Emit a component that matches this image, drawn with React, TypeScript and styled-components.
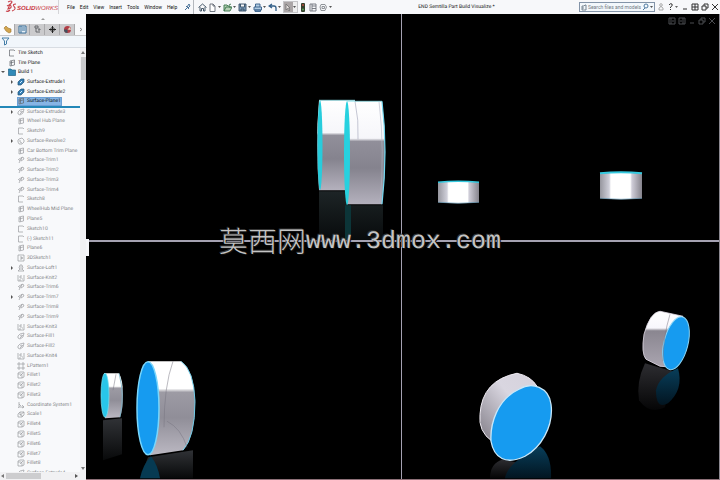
import React from "react";
import styled, { createGlobalStyle, css } from "styled-components";

const GlobalStyle = createGlobalStyle`
  * { box-sizing: border-box; }
  html, body, #root { height: 100%; margin: 0; }
  body { background: #000; overflow: hidden; }
  body, button, input { font-family: Roboto, sans-serif; font-size: 5px; }
  button { border: 0; padding: 0; background: none; color: inherit; }
  svg { display: block; flex: none; }
`;

const Shell = styled.div`
  height: 100vh;
  display: flex;
  flex-direction: column;
  position: relative;
  text-rendering: geometricPrecision;
`;

const Header = styled.header`
  flex: 0 0 14px;
  display: flex;
  align-items: center;
  background: #f7f8fa;
  color: #111;
`;

const Brand = styled.div`
  flex: 0 0 59px;
  height: 14px;
  border-right: 1px solid #d5d5d8;
`;

const Menu = styled.nav`
  flex: 0 0 135px;
  height: 14px;
  display: flex;
  align-items: center;
  gap: 5px;
  padding: 0 2px 0 8px;
  border-right: 1px solid #b4b8bd;
`;

const IconButton = styled.button`
  line-height: 8px;
`;

const MenuButton = styled(IconButton)`
  white-space: nowrap;
`;

const PinButton = styled(IconButton)`
  margin-left: auto;
`;

const Toolbar = styled.div`
  display: flex;
  align-items: center;
  padding-left: 4px;
`;

const ToolButton = styled.button<{ $wide?: boolean; $active?: boolean }>`
  display: flex;
  align-items: center;
  justify-content: space-between;
  width: ${(p) => (p.$wide ? 15 : 10)}px;
  height: 12px;
  padding: 0 2px 0 0;
  ${(p) =>
    p.$active &&
    css`
      background: linear-gradient(90deg, #aaa5a6 0 10px, #eee 10px);
      outline: 1px solid #c5c5c8;
      outline-offset: -1px;
      margin-right: 1px;
    `}
`;

const Title = styled.h1`
  flex: 1;
  margin: 0;
  font-size: 5px;
  font-weight: 400;
  line-height: 8px;
  text-align: center;
  color: #111;
  white-space: nowrap;
`;

const Search = styled.label`
  flex: 0 0 76px;
  min-width: 0;
  height: 10px;
  display: flex;
  align-items: center;
  gap: 1px;
  padding: 0 1px;
  border: 1px solid #8394a8;
  background: #f3f8fc;
`;

const SearchInput = styled.input`
  flex: 1;
  min-width: 0;
  height: 7px;
  padding: 0;
  border: 0;
  background: none;
  &::placeholder { color: #727a83; opacity: 1; }
`;

const WindowControls = styled.div<{ $dim?: boolean }>`
  display: flex;
  align-items: center;
  gap: 2px;
  ${(p) =>
    p.$dim
      ? css`
          position: absolute;
          top: 3px;
          right: 3px;
          color: #4b4d51;
        `
      : css`
          padding: 0 1px 0 2px;
          color: #333;
        `}
`;

const Body = styled.div`
  flex: 1;
  min-height: 0;
  display: flex;
`;

const Sidebar = styled.aside`
  flex: 0 0 86px;
  display: flex;
  flex-direction: column;
  background: #f8f9fb;
  position: relative;
`;

const Splitter = styled.div`
  flex: 0 0 10px;
  display: flex;
  align-items: center;
  justify-content: center;
`;

const Tabs = styled.div`
  flex: 0 0 12px;
  display: flex;
  border-bottom: 1px solid #c9c9cb;
`;

const TabButton = styled.button<{ $active?: boolean }>`
  width: 15px;
  display: flex;
  align-items: center;
  justify-content: center;
  border-right: 1px solid #a9a9ab;
  background: ${(p) => (p.$active ? "#fbfbfc" : "#cbcbcd")};
`;

const MoreTabs = styled.button`
  flex: 1;
  display: flex;
  align-items: center;
  justify-content: center;
`;

const FilterRow = styled.div`
  flex: 0 0 12px;
  display: flex;
  align-items: center;
  padding-left: 1px;
  background: #f1f6fb;
  border-bottom: 1px solid #d8dde3;
`;

const TreeArea = styled.div`
  flex: 1;
  min-height: 0;
  display: flex;
  overflow: hidden;
`;

const Tree = styled.ul`
  flex: 1;
  min-width: 0;
  margin: 0 0 -6px;
  padding: 0;
  list-style: none;
  display: grid;
  grid-auto-rows: minmax(0, 1fr);
`;

const Row = styled.li<{ $root?: boolean; $muted?: boolean; $marker?: boolean }>`
  display: flex;
  align-items: center;
  padding-left: ${(p) => (p.$root ? 1 : 10)}px;
  color: ${(p) => (p.$muted ? "#848588" : "#111")};
  border-bottom: ${(p) => (p.$marker ? "1px solid #2488b8" : "0")};
  box-shadow: ${(p) => (p.$marker ? "0 1px 0 #2488b8" : "none")};
`;

const Arrow = styled.span`
  width: 7px;
  flex: none;
`;

const RowLabel = styled.span<{ $selected?: boolean }>`
  display: flex;
  align-items: center;
  gap: 2px;
  height: 9px;
  padding-right: 1px;
  line-height: 8px;
  white-space: nowrap;
  background: ${(p) => (p.$selected ? "#86b5e5" : "none")};
  box-shadow: ${(p) => (p.$selected ? "inset 0 0 0 1px #6c9fd4" : "none")};
`;

const ScrollY = styled.div`
  flex: 0 0 6px;
  display: flex;
  flex-direction: column;
  align-items: center;
  justify-content: space-between;
  padding: 3px 0 2px;
  background: #f1f1f3;
`;

const ThumbY = styled.div`
  width: 5px;
  height: 23px;
  margin: 3px 0 auto;
  background: #c9cacc;
`;

const ScrollX = styled.div`
  flex: 0 0 8px;
  display: flex;
  align-items: center;
  gap: 2px;
  padding: 0 8px 1px 1px;
  background: #f1f1f3;
`;

const ThumbX = styled.div`
  width: 35px;
  height: 6px;
  margin-right: auto;
  background: #cdcdcf;
`;

const Handle = styled.button`
  position: absolute;
  left: 86px;
  top: calc(50% - 8px);
  width: 3px;
  height: 17px;
  background: #f5f5f8;
  z-index: 1;
`;

const Viewports = styled.main`
  flex: 1;
  min-width: 0;
  position: relative;
  display: grid;
  grid-template-columns: 315fr 317fr;
  grid-template-rows: 226fr 236fr;
  gap: 2px 1px;
  background: #a5a2b2;
  border-right: 1px solid #8b8890;
  border-bottom: 1px solid #8e7078;
`;

const Pane = styled.section`
  min-width: 0;
  min-height: 0;
  overflow: hidden;
  background: #000;
`;

const Scene = styled.svg`
  width: 100%;
  height: 100%;
`;

const Watermark = styled.div`
  position: absolute;
  top: 50%;
  left: 50%;
  transform: translate(-50%, -50%);
  display: flex;
  align-items: center;
  white-space: nowrap;
  color: #c4c4c4;
  text-shadow: 1px 1px 0 #111, -1px -1px 0 #333;
  pointer-events: none;
`;

const WatermarkHan = styled.span`
  font: 300 29px/32px "Noto Sans CJK SC", sans-serif;
`;

const WatermarkLatin = styled.span`
  padding-top: 4px;
  font: 25px/34px "Liberation Mono", monospace;
`;

type Kind =
  | "sketch" | "plane" | "folder" | "extrude" | "revolve" | "trim" | "loft"
  | "knit" | "fill" | "pattern" | "fillet" | "coord" | "scale" | "sketch3d";

const shapes: Record<Kind, React.ReactNode> = {
  sketch: <path d="M6 1H1.5V7H6M6 1L7 2" />,
  plane: <path d="M2 2L6.5 1V6L2 7ZM3.5 2V6.5M2 4L6 3" />,
  folder: <path d="M0.500 1H3L4 2H7.500V7.500H0.500Z" fill="#318ab8" stroke="#216487" />,
  extrude: (
    <g>
      <path d="M1 4L4 1L7 1L7 4L4 7L1 7Z" fill="#347db4" stroke="#245477" />
      <path d="M3 5L5 3" stroke="#d4efff" strokeWidth="1" />
    </g>
  ),
  revolve: <path d="M2 2L5 1L7 3V5L5 7H2L1 5V3ZM3 3V5L5 6" />,
  trim: <path d="M1 3L3 5L2 7M2 3L6 1L7 3L4 5L3 3M5 1L4 4" />,
  loft: <path d="M3 1H5L6 4L5 5L7 7H1L3 5L2 4ZM3 3H5M3 5H5" />,
  knit: <path d="M1 1V7H7V1M3 5V7M4 1V5M2 3H4M5 5H6" />,
  fill: <path d="M1 4L3 2L7 1L6 5L3 7L1 6ZM3 4L5 3M3 6L6 3" />,
  pattern: <path d="M1 1H3V3H1ZM5 1H7V3H5ZM1 5H3V7H1ZM5 5H7V7H5Z" />,
  fillet: <path d="M1 2L3 1H7V6L5 7H1ZM1 3H4Q5 3 5 5V7M3 5L6 2" />,
  coord: <path d="M2 1V6H7M2 6L1 7M2 3L4 5M5 4L7 6L5 7" />,
  scale: <path d="M1 4L3 2H7V5L5 7H1ZM3 2V5H5V7M3 5L7 2" />,
  sketch3d: <path d="M1 1H7V7H1ZM3 3H5V5H3M5 3V5" />,
};

function KindIcon({ kind, muted }: { kind: Kind; muted?: boolean }) {
  return (
    <svg width="8" height="8" viewBox="0 0 8 8" fill="none" stroke={muted ? "#9a9b9f" : "#62656b"} strokeWidth="0.7" aria-hidden="true">
      {shapes[kind]}
    </svg>
  );
}

interface Item {
  label: string;
  kind: Kind;
  arrow?: boolean;
}

const roots: Item[] = [
  { label: "Tire Sketch", kind: "sketch" },
  { label: "Tire Plane", kind: "plane" },
  { label: "Build 1", kind: "folder", arrow: true },
];

const active: Item[] = [
  { label: "Surface-Extrude1", kind: "extrude", arrow: true },
  { label: "Surface-Extrude2", kind: "extrude", arrow: true },
  { label: "Surface-Plane1", kind: "plane" },
];

const suppressed: Item[] = [
  { label: "Surface-Extrude3", kind: "fill", arrow: true },
  { label: "Wheel Hub Plane", kind: "plane" },
  { label: "Sketch9", kind: "sketch" },
  { label: "Surface-Revolve2", kind: "revolve", arrow: true },
  { label: "Car Bottom Trim Plane", kind: "plane" },
  { label: "Surface-Trim1", kind: "trim" },
  { label: "Surface-Trim2", kind: "trim" },
  { label: "Surface-Trim3", kind: "trim" },
  { label: "Surface-Trim4", kind: "trim" },
  { label: "Sketch8", kind: "sketch" },
  { label: "WheelHub Mid Plane", kind: "plane" },
  { label: "Plane5", kind: "plane" },
  { label: "Sketch10", kind: "sketch" },
  { label: "(-) Sketch11", kind: "sketch" },
  { label: "Plane6", kind: "plane" },
  { label: "3DSketch1", kind: "sketch3d" },
  { label: "Surface-Loft1", kind: "loft", arrow: true },
  { label: "Surface-Knit2", kind: "knit" },
  { label: "Surface-Trim6", kind: "trim" },
  { label: "Surface-Trim7", kind: "trim", arrow: true },
  { label: "Surface-Trim8", kind: "trim" },
  { label: "Surface-Trim9", kind: "trim" },
  { label: "Surface-Knit3", kind: "knit" },
  { label: "Surface-Fill1", kind: "fill" },
  { label: "Surface-Fill2", kind: "fill" },
  { label: "Surface-Knit4", kind: "knit" },
  { label: "LPattern1", kind: "pattern" },
  { label: "Fillet1", kind: "fillet" },
  { label: "Fillet2", kind: "fillet" },
  { label: "Fillet3", kind: "fillet" },
  { label: "Coordinate System1", kind: "coord" },
  { label: "Scale1", kind: "scale" },
  { label: "Fillet4", kind: "fillet" },
  { label: "Fillet5", kind: "fillet" },
  { label: "Fillet6", kind: "fillet" },
  { label: "Fillet7", kind: "fillet" },
  { label: "Fillet8", kind: "fillet" },
  { label: "Surface-Extrude4", kind: "fill" },
];

function TreeRow({ item, root, muted, selected }: { item: Item; root?: boolean; muted?: boolean; selected?: boolean }) {
  return (
    <Row $root={root} $muted={muted} $marker={selected}>
      <Arrow>
        {item.arrow && (
          <svg width="4" height="4" viewBox="0 0 4 4" aria-hidden="true">
            <path d={root ? "M0 1H4L2 3Z" : "M1 0L3 2L1 4Z"} fill="#555" />
          </svg>
        )}
      </Arrow>
      <RowLabel $selected={selected}>
        <KindIcon kind={item.kind} muted={muted} />
        {item.label}
      </RowLabel>
    </Row>
  );
}

const menus = ["File", "Edit", "View", "Insert", "Tools", "Window", "Help"];

const tools: { name: string; wide?: boolean; active?: boolean; art: React.ReactNode }[] = [
  { name: "Home", art: <path d="M0.5 4.5L4.5 1L8.5 4.5M2 4V8H3.5V5.5H5.5V8H7V4" stroke="#33475a" /> },
  { name: "New", wide: true, art: <path d="M2 1H5L7 3V8.5H2ZM5 1V3H7" stroke="#626a74" fill="#fff" /> },
  { name: "Open", wide: true, art: <path d="M1 8V2H4L5 3H7V5M1 8L3 4H9L7 8ZM6 2L8 1" stroke="#39744b" fill="#b6d1b5" /> },
  { name: "Save", wide: true, art: <path d="M1 1H8V8H1ZM2.5 1V4H6.5V1M3 8V6H6V8" stroke="#344d65" fill="#7c9bb7" /> },
  { name: "Print", wide: true, art: <path d="M2.5 4V1H7V4M1 4H8.5V7H1ZM2 7H7.5V8.5H2Z" stroke="#365f88" fill="#b2cde3" /> },
  { name: "Undo", wide: true, art: <path d="M4 1L1 3L4 5M1 3H6Q8 3 8 5V8" stroke="#315e88" strokeWidth="1.3" /> },
  { name: "Select", wide: true, active: true, art: <path d="M3 1V7L4.5 5.5L6 8L7 7L5.5 5H7Z" fill="#e4dedd" stroke="#777" /> },
  {
    name: "Rebuild",
    art: (
      <g stroke="none">
        <rect x="2" y="0" width="4" height="9" rx="1" fill="#34402b" />
        <circle cx="4" cy="2" r="1" fill="#b34b3d" />
        <circle cx="4" cy="6.5" r="1" fill="#5aa35e" />
      </g>
    ),
  },
  { name: "File properties", art: <path d="M1 1H7V8H1ZM3 1V8M3 3H7M3 5.5H7" stroke="#6e737b" /> },
  { name: "Options", wide: true, art: <path d="M2 1.5H6L7.5 4L6 7.5H2L1 4ZM3 3.5H5.5V5.5H3Z" stroke="#85898f" /> },
];

const controls: { name: string; d: string }[] = [
  { name: "Minimize", d: "M2 6H6" },
  { name: "Maximize", d: "M1 1H7V7H1ZM1 4H7M4 1V7" },
  { name: "Restore", d: "M3 3V1H7V5H5M1 3H5V7H1Z" },
  { name: "Close", d: "M1 1L7 7M7 1L1 7" },
];

const paneControls: { name: string; d: string }[] = [
  { name: "Previous view", d: "M1 1H7V7H1ZM3 1V7M5 3V5" },
  { name: "Next view", d: "M1 1H7V7H1ZM5 1V7M3 3V5" },
  controls[0],
  controls[2],
  controls[3],
];

function LineIcon({ d }: { d: string }) {
  return (
    <svg width="8" height="8" viewBox="0 0 8 8" fill="none" stroke="currentColor" strokeWidth="1" aria-hidden="true">
      <path d={d} />
    </svg>
  );
}

function Logo() {
  return (
    <svg width="58" height="14" viewBox="0 0 58 14" role="img" aria-label="SOLIDWORKS">
      <g fill="none" stroke="#c8434b" strokeWidth="1.1">
        <path d="M8 2Q12 0 12 2Q11 4 9 5M10 4L8 9Q12 8 11 6Q10 4 7 6" />
        <path d="M16 4Q12 4 14 6.500Q17 9 12 11M6 11Q8 12 10 10" />
      </g>
      <text x="17" y="10" fontFamily="Liberation Sans" fontSize="6" fontWeight="700" fontStyle="italic" fill="#c8333c">
        SOLID<tspan fontWeight="400">WORKS</tspan>
      </text>
    </svg>
  );
}

function TopLeftScene() {
  return (
    <Scene viewBox="86 14 315 226" preserveAspectRatio="xMidYMid meet" aria-label="Side view of tires">
      <defs>
        <linearGradient id="side" x2="0" y2="1">
          <stop offset="0" stopColor="#fff" />
          <stop offset="0.36" stopColor="#f6f6fa" />
          <stop offset="0.39" stopColor="#918f9a" />
          <stop offset="0.65" stopColor="#85838e" />
          <stop offset="1" stopColor="#b4b1bd" />
        </linearGradient>
        <linearGradient id="mirror" x2="0" y2="1">
          <stop offset="0" stopColor="#1d2426" />
          <stop offset="1" stopColor="#080b0c" />
        </linearGradient>
      </defs>
      <path d="M319 191H346V240H319ZM346 205H383V240H346Z" fill="url(#mirror)" />
      <path d="M345 205H351V240H345Z" fill="#0c3538" />
      <path d="M319 100H355V190H319Q315 145 319 100Z" fill="url(#side)" />
      <ellipse cx="320" cy="145" rx="2.500" ry="45" fill="#27ccdc" />
      <path d="M346 101H382Q388 150 382 204H347Z" fill="url(#side)" />
      <path d="M382 101Q388 150 382 204" fill="none" stroke="#73d8f0" strokeWidth="1.200" />
      <path d="M379 101Q385 150 380 203" fill="none" stroke="#b2b6c6" strokeWidth="0.600" />
      <path d="M355 101Q359 120 358 139" fill="none" stroke="#8d91a8" strokeWidth="0.500" />
      <ellipse cx="347" cy="153" rx="3" ry="52" fill="#27d1df" />
      <path d="M319 100H355M347 101H382" stroke="#83dfea" strokeWidth="0.700" />
    </Scene>
  );
}

function TopRightScene() {
  return (
    <Scene viewBox="402 14 317 226" preserveAspectRatio="xMidYMid meet" aria-label="Front view of tires">
      <defs>
        <linearGradient id="front">
          <stop offset="0" stopColor="#96969e" />
          <stop offset="0.22" stopColor="#d0d0da" />
          <stop offset="0.26" stopColor="#fff" />
          <stop offset="0.72" stopColor="#fff" />
          <stop offset="0.76" stopColor="#cfcdd8" />
          <stop offset="1" stopColor="#85838c" />
        </linearGradient>
      </defs>
      <path d="M438 182Q458 180 479 182V202Q458 204 438 202Z" fill="url(#front)" />
      <path d="M438 182Q458 180 479 182" stroke="#35c9df" strokeWidth="1.500" fill="none" />
      <path d="M438 202Q458 204 479 202" stroke="#77a9c4" fill="none" strokeWidth="0.700" />
      <path d="M600 173Q621 172 642 173V198Q621 200 600 198Z" fill="url(#front)" />
      <path d="M600 173Q621 171 642 173" stroke="#35c9df" strokeWidth="2" fill="none" />
      <path d="M600 198Q621 200 642 198" stroke="#77a9c4" fill="none" strokeWidth="0.700" />
    </Scene>
  );
}

function BottomLeftScene() {
  return (
    <Scene viewBox="86 242 315 236" preserveAspectRatio="xMidYMid meet" aria-label="Angled view of tires">
      <defs>
        <linearGradient id="fade" x2="0" y2="1">
          <stop offset="0" stopColor="#303236" />
          <stop offset="1" stopColor="#08090a" />
        </linearGradient>
        <linearGradient id="tread" x2="0" y2="1">
          <stop offset="0" stopColor="#fff" />
          <stop offset="0.29" stopColor="#fff" />
          <stop offset="0.33" stopColor="#9d9ba4" />
          <stop offset="0.6" stopColor="#908e98" />
          <stop offset="1" stopColor="#bbb8c2" />
        </linearGradient>
      </defs>
      <path d="M103 420L122 418V454L103 460Z" fill="url(#fade)" />
      <path d="M148 457L193 450V478H140Z" fill="url(#fade)" />
      <path d="M140 478Q143 464 151 456Q158 465 160 478Z" fill="#063a52" />
      <path d="M104 373H119Q123 380 123 394Q123 410 120 417L105 418Z" fill="url(#tread)" />
      <ellipse cx="105" cy="395" rx="4" ry="22" fill="#28c6e9" stroke="#75dff1" strokeWidth="0.700" />
      <path d="M119 373Q125 395 120 417" fill="none" stroke="#75b5ca" strokeWidth="0.800" />
      <path d="M148 361H181Q194 370 195 401Q195 437 183 450L150 455Z" fill="url(#tread)" />
      <path d="M181 361Q194 370 195 401Q195 437 183 450" fill="none" stroke="#72cce8" />
      <ellipse cx="148" cy="408" rx="11" ry="46.500" fill="#169bf0" stroke="#79d6fc" strokeWidth="1.500" />
      <path d="M173 361Q164 386 164 427M167 421Q181 428 187 447M116 374L113 390" fill="none" stroke="#777580" strokeWidth="0.500" />
    </Scene>
  );
}

function BottomRightScene() {
  return (
    <Scene viewBox="402 242 317 236" preserveAspectRatio="xMidYMid meet" aria-label="Perspective view of tires">
      <defs>
        <linearGradient id="rim" x2="0" y2="1">
          <stop offset="0" stopColor="#fff" />
          <stop offset="0.300" stopColor="#f8f7fc" />
          <stop offset="0.350" stopColor="#8a8690" />
          <stop offset="1" stopColor="#aaa5b0" />
        </linearGradient>
        <linearGradient id="rimSoft" x1="1" x2="0" y2="1">
          <stop offset="0" stopColor="#d5d1dc" />
          <stop offset="0.400" stopColor="#d9d6e0" />
          <stop offset="1" stopColor="#817d87" />
        </linearGradient>
        <linearGradient id="poolBlue" x2="0" y2="1">
          <stop offset="0" stopColor="#083e5a" />
          <stop offset="1" stopColor="#021521" />
        </linearGradient>
        <linearGradient id="poolGray" x2="0" y2="1">
          <stop offset="0" stopColor="#2d2d31" />
          <stop offset="1" stopColor="#050506" />
        </linearGradient>
      </defs>
      <path d="M645 363Q636 382 639 400Q650 415 665 407L672 371Z" fill="url(#poolGray)" />
      <path d="M678 368Q684 389 668 403Q656 410 656 390Q659 376 678 368Z" fill="url(#poolBlue)" />
      <path d="M490 478Q490 463 503 459L548 470V478Z" fill="url(#poolGray)" />
      <path d="M505 478Q507 463 540 446Q552 455 551 478Z" fill="url(#poolBlue)" />
      <path d="M660 311L683 316L674 367L660 366L646 359Q641 353 644 334Q650 312 660 311Z" fill="url(#rim)" stroke="#e2dce7" strokeWidth="0.800" />
      <ellipse cx="676" cy="343" rx="12" ry="27" transform="rotate(14 676 343)" fill="#169bf0" stroke="#88d5f7" />
      <path d="M670 314Q663 337 663 361" fill="none" stroke="#777280" strokeWidth="0.500" />
      <path d="M517 373Q531 376 537 386L492 441Q478 431 480 414Q482 380 517 373Z" fill="url(#rimSoft)" stroke="#f0ecf4" />
      <path d="M491 441C490 424 497 399 519 389C532 381 549 387 551 404C554 427 540 448 525 456C506 465 494 458 491 441Z" fill="#169bf0" stroke="#c9e7f8" strokeWidth="1.300" />
    </Scene>
  );
}

export default function App() {
  return (
    <Shell>
      <GlobalStyle />
      <Header>
        <Brand><Logo /></Brand>
        <Menu aria-label="Application">
          {menus.map((m) => <MenuButton key={m}>{m}</MenuButton>)}
          <PinButton aria-label="Pin menu">
            <svg width="7" height="8" viewBox="0 0 7 8" fill="none" stroke="#477097"><path d="M1 7L3 5M2 3L5 6M3 4L5 1L6 3L4 5" /></svg>
          </PinButton>
        </Menu>
        <Toolbar>
          {tools.map((t) => (
            <ToolButton key={t.name} $wide={t.wide} $active={t.active} aria-label={t.name}>
              <svg width="9" height="9" viewBox="0 0 9 9" fill="none" strokeWidth="0.900">{t.art}</svg>
              {t.wide && <svg width="3" height="2" viewBox="0 0 3 2"><path d="M0 0H3L1.500 2Z" fill="#555" /></svg>}
            </ToolButton>
          ))}
        </Toolbar>
        <Title>END Semtilla Part Build Visualize *</Title>
        <Search>
          <svg width="6" height="7" viewBox="0 0 6 7" fill="none" stroke="#596b7a" strokeWidth="0.800"><path d="M1 2H3L4 1H5V6H1ZM2 3V5" /></svg>
          <SearchInput size={1} aria-label="Search files and models" placeholder="Search files and models" />
          <svg width="11" height="8" viewBox="0 0 11 8" fill="none" stroke="#4f7ba2"><circle cx="4" cy="3" r="2" /><path d="M3 5L1 7" /><path d="M8 3H11L9.500 5Z" fill="#555" stroke="none" /></svg>
        </Search>
        <WindowControls>
          <IconButton aria-label="Sign in"><svg width="8" height="8" viewBox="0 0 8 8" fill="none" stroke="#999" strokeWidth="0.800"><circle cx="4" cy="2" r="1.300" /><path d="M2 7V5L4 3.500L6 5V7Z" /></svg></IconButton>
          <IconButton aria-label="Help options"><svg width="12" height="8" viewBox="0 0 12 8" fill="none" stroke="#333"><path d="M2 2Q3 0 5 1Q6 3 3.500 4V5M3.500 6V7" /><path d="M8 3H11L9.500 5Z" fill="#666" stroke="none" /></svg></IconButton>
          {controls.map((c) => <IconButton key={c.name} aria-label={c.name}><LineIcon d={c.d} /></IconButton>)}
        </WindowControls>
      </Header>
      <Body>
        <Sidebar>
          <Splitter><svg width="4" height="3" viewBox="0 0 4 3"><path d="M0 2L2 0L4 2Z" fill="#999" /></svg></Splitter>
          <Tabs>
            <TabButton $active aria-label="Feature tree"><svg width="9" height="9" viewBox="0 0 9 9"><path d="M1 3L3 1L5 3L8 4V7L6 8L3 6Z" fill="#d3a54e" stroke="#9b742f" strokeWidth="0.600" /></svg></TabButton>
            <TabButton aria-label="Properties"><svg width="9" height="9" viewBox="0 0 9 9" fill="#e7f0f7" stroke="#386e99"><path d="M1 1H8V8H1ZM3 1V8M4 3H7M4 5H7" /></svg></TabButton>
            <TabButton aria-label="Configurations"><svg width="9" height="9" viewBox="0 0 9 9" fill="none" stroke="#67686c"><path d="M2 1H5V3H2ZM3 3V7H5M5 4H7V5H5M5 7H7" /></svg></TabButton>
            <TabButton aria-label="Dimensions"><svg width="9" height="9" viewBox="0 0 9 9" fill="none" stroke="#222"><path d="M4.500 1V8M1 4.500H8" /><circle cx="4.500" cy="4.500" r="2" strokeWidth="0.700" /></svg></TabButton>
            <TabButton aria-label="Appearances"><svg width="9" height="9" viewBox="0 0 9 9"><circle cx="4.500" cy="4.500" r="3.500" fill="#b33d46" /><path d="M1 4.500A3.500 3.500 0 0 0 4.500 8V4.500Z" fill="#43515e" /><path d="M4.500 4.500L7 2L8 5Z" fill="#e6d8c2" /></svg></TabButton>
            <MoreTabs aria-label="More tabs"><svg width="4" height="5" viewBox="0 0 4 5" fill="none" stroke="#888"><path d="M1 1L3 2.500L1 4" /></svg></MoreTabs>
          </Tabs>
          <FilterRow><svg width="9" height="9" viewBox="0 0 9 9" fill="none" stroke="#467fa8"><path d="M1 1H8L5.500 4V7L3.500 8V4Z" /></svg></FilterRow>
          <TreeArea>
            <Tree>
              {roots.map((i) => <TreeRow key={i.label} item={i} root />)}
              {active.map((i) => <TreeRow key={i.label} item={i} selected={i.label === "Surface-Plane1"} />)}
              {suppressed.map((i) => <TreeRow key={i.label} item={i} muted />)}
            </Tree>
            <ScrollY>
              <svg width="4" height="3" viewBox="0 0 4 3"><path d="M0 3L2 0L4 3Z" fill="#777" /></svg>
              <ThumbY />
              <svg width="4" height="3" viewBox="0 0 4 3"><path d="M0 0L2 3L4 0Z" fill="#777" /></svg>
            </ScrollY>
          </TreeArea>
          <ScrollX>
            <svg width="3" height="4" viewBox="0 0 3 4"><path d="M3 0L0 2L3 4Z" fill="#777" /></svg>
            <ThumbX />
            <svg width="3" height="4" viewBox="0 0 3 4"><path d="M0 0L3 2L0 4Z" fill="#555" /></svg>
          </ScrollX>
          <Handle aria-label="Collapse panel" />
        </Sidebar>
        <Viewports>
          <Pane><TopLeftScene /></Pane>
          <Pane><TopRightScene /></Pane>
          <Pane><BottomLeftScene /></Pane>
          <Pane><BottomRightScene /></Pane>
          <WindowControls $dim>
            {paneControls.map((c) => <IconButton key={c.name} aria-label={c.name}><LineIcon d={c.d} /></IconButton>)}
          </WindowControls>
        </Viewports>
      </Body>
      <Watermark>
        <WatermarkHan lang="zh-CN">莫西网</WatermarkHan>
        <WatermarkLatin>www.3dmox.com</WatermarkLatin>
      </Watermark>
    </Shell>
  );
}
